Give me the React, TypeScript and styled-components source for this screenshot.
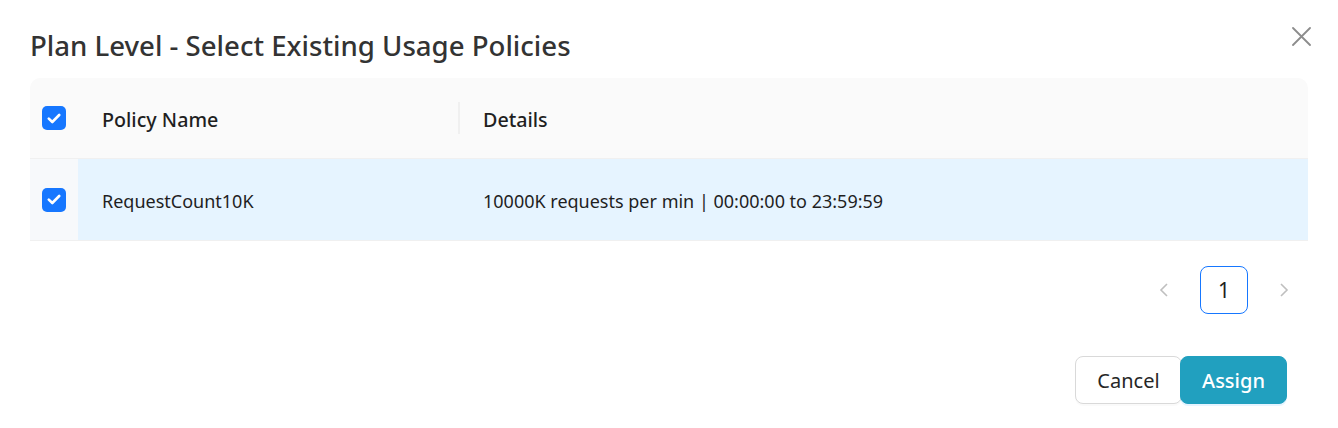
import { createGlobalStyle, styled } from "styled-components";

const GlobalStyle = createGlobalStyle`
  html, body {
    margin: 0;
    padding: 0;
    background: #ffffff;
    font-family: "Noto Sans", "Open Sans", sans-serif;
  }
  * {
    box-sizing: border-box;
  }
`;

const policies = [
  {
    name: "RequestCount10K",
    details: "10000K requests per min | 00:00:00 to 23:59:59",
  },
];

const Check = () => (
  <CheckBox>
    <svg width="14" height="11" viewBox="0 0 14 11" fill="none">
      <path
        d="M1.8 5.6 L5.3 9 L12.2 2"
        stroke="#ffffff"
        strokeWidth="2.6"
        strokeLinecap="round"
        strokeLinejoin="round"
      />
    </svg>
  </CheckBox>
);

const App = () => {
  return (
    <>
      <GlobalStyle />
      <Modal>
        <Header>
          <Title>Plan Level - Select Existing Usage Policies</Title>
          <CloseButton aria-label="close">
            <svg width="19" height="19" viewBox="0 0 19 19">
              <path
                d="M1 1 L18 18 M18 1 L1 18"
                stroke="#8c8c8c"
                strokeWidth="1.8"
                strokeLinecap="round"
              />
            </svg>
          </CloseButton>
        </Header>

        <Table>
          <HeadRow>
            <SelectCell>
              <Check />
            </SelectCell>
            <HeadCell>Policy Name</HeadCell>
            <HeadCell $divider>Details</HeadCell>
          </HeadRow>
          {policies.map((p) => (
            <BodyRow key={p.name}>
              <SelectCell $selected>
                <Check />
              </SelectCell>
              <BodyCell>{p.name}</BodyCell>
              <BodyCell $wide>{p.details}</BodyCell>
            </BodyRow>
          ))}
        </Table>

        <Pagination>
          <PageArrow aria-label="previous">
            <svg width="12" height="14" viewBox="0 0 12 14">
              <path
                d="M9 1 L3 7 L9 13"
                stroke="#bfbfbf"
                strokeWidth="1.6"
                fill="none"
              />
            </svg>
          </PageArrow>
          <PageItem>1</PageItem>
          <PageArrow aria-label="next">
            <svg width="12" height="14" viewBox="0 0 12 14">
              <path
                d="M3 1 L9 7 L3 13"
                stroke="#bfbfbf"
                strokeWidth="1.6"
                fill="none"
              />
            </svg>
          </PageArrow>
        </Pagination>

        <Footer>
          <Button>Cancel</Button>
          <Button $primary>Assign</Button>
        </Footer>
      </Modal>
    </>
  );
};

export default App;

const Modal = styled.div`
  width: 1338px;
  height: 428px;
  padding: 0 30px;
  display: flex;
  flex-direction: column;
  background: #ffffff;
`;

const Header = styled.div`
  height: 78px;
  display: flex;
  justify-content: space-between;
  align-items: flex-start;
  padding-top: 27px;
`;

const Title = styled.h2`
  margin: 0;
  font-size: 27.6px;
  line-height: 36px;
  font-weight: 500;
  color: #333333;
`;

const CloseButton = styled.button`
  border: none;
  background: transparent;
  padding: 0;
  margin: 0 -3px 0 0;
  width: 19px;
  height: 19px;
  cursor: pointer;
  display: flex;
`;

const Table = styled.div`
  border-radius: 10px 10px 0 0;
  overflow: hidden;
`;

const HeadRow = styled.div`
  display: grid;
  grid-template-columns: 48px 380px 1fr;
  height: 81px;
  background: #fafafa;
  border-bottom: 1px solid #f0f0f0;
`;

const BodyRow = styled.div`
  display: grid;
  grid-template-columns: 48px 380px 1fr;
  height: 82px;
  background: #e6f4ff;
  border-bottom: 1px solid #f0f0f0;
`;

const SelectCell = styled.div<{ $selected?: boolean }>`
  display: flex;
  align-items: center;
  padding-left: 12px;
  background: ${(p) => (p.$selected ? "#f7f9fb" : "transparent")};
`;

const CheckBox = styled.span`
  width: 24px;
  height: 24px;
  border-radius: 5px;
  background: #1677ff;
  display: flex;
  align-items: center;
  justify-content: center;
`;

const HeadCell = styled.div<{ $divider?: boolean }>`
  position: relative;
  display: flex;
  align-items: center;
  padding-left: ${(p) => (p.$divider ? "25px" : "24px")};
  padding-top: 2px;
  font-size: 19.7px;
  font-weight: 500;
  color: #1f1f1f;

  ${(p) =>
    p.$divider &&
    `
    &::before {
      content: "";
      position: absolute;
      left: 0;
      top: 24px;
      width: 2px;
      height: 32px;
      background: #f0f0f0;
    }
  `}
`;

const BodyCell = styled.div<{ $wide?: boolean }>`
  display: flex;
  align-items: center;
  padding-left: ${(p) => (p.$wide ? "25px" : "24px")};
  padding-top: 2px;
  font-size: 18px;
  color: #1f1f1f;
`;

const Pagination = styled.div`
  display: flex;
  justify-content: flex-end;
  gap: 12px;
  margin-top: 25px;
`;

const PageArrow = styled.button`
  width: 48px;
  height: 48px;
  border: none;
  background: transparent;
  display: flex;
  align-items: center;
  justify-content: center;
  padding: 0;
`;

const PageItem = styled.div`
  width: 48px;
  height: 48px;
  border: 1px solid #1677ff;
  border-radius: 8px;
  display: flex;
  align-items: center;
  justify-content: center;
  font-size: 21px;
  color: #1f1f1f;
`;

const Footer = styled.div`
  display: flex;
  justify-content: flex-end;
  margin-top: 42px;
  padding-right: 21px;
`;

const Button = styled.button<{ $primary?: boolean }>`
  width: 107px;
  height: 48px;
  border-radius: 8px;
  font-family: "Noto Sans", "Open Sans", sans-serif;
  font-size: 20px;
  font-weight: ${(p) => (p.$primary ? 500 : 400)};
  cursor: pointer;
  border: 1px solid ${(p) => (p.$primary ? "#21a0bf" : "#d9d9d9")};
  background: ${(p) => (p.$primary ? "#21a0bf" : "#ffffff")};
  color: ${(p) => (p.$primary ? "#ffffff" : "#262626")};
  box-shadow: ${(p) =>
    p.$primary ? "0 2px 0 rgba(5, 145, 255, 0.1)" : "0 2px 0 rgba(0, 0, 0, 0.02)"};
  margin-left: ${(p) => (p.$primary ? "-2px" : "0")};
`;
